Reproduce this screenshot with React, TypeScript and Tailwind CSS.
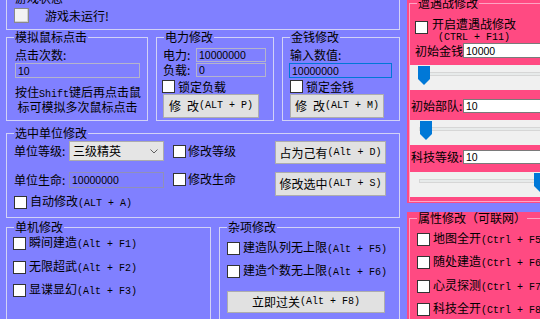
import React from "react";

// ASCII parts of labels are drawn in a fixed-width face, like the original SimSun look
function A({ children }: { children: React.ReactNode }) {
  return <span className="font-['Liberation_Mono',monospace] text-[10px]">{children}</span>;
}

function Box({ className = "" }: { className?: string }) {
  return <span className={`block w-[13px] h-[13px] shrink-0 bg-white border border-[#333333] ${className}`} />;
}

function Group({
  title,
  pink,
  className = "",
  children,
}: {
  title: string;
  pink?: boolean;
  className?: string;
  children?: React.ReactNode;
}) {
  return (
    <div className={`relative border ${pink ? "border-[#ffa3c2]" : "border-[#d2d2f6]"} ${className}`}>
      <span
        className={`absolute -top-[7px] left-[7px] px-[1px] leading-[12px] whitespace-nowrap ${
          pink ? "bg-[#ff4a82]" : "bg-[#8080ff]"
        }`}
      >
        {title}
      </span>
      {children}
    </div>
  );
}

function Btn({ className = "", children }: { className?: string; children: React.ReactNode }) {
  return (
    <div
      className={`flex items-center justify-center shrink-0 bg-[#e1e1e1] border border-[#adadad] whitespace-nowrap ${className}`}
    >
      {children}
    </div>
  );
}

function Field({ value, className = "" }: { value: string; className?: string }) {
  return (
    <div
      className={`flex items-center shrink-0 pl-[2px] border font-['Liberation_Sans',sans-serif] text-[10.5px] ${className}`}
    >
      {value}
    </div>
  );
}

function Slider({ left, className = "" }: { left: number; className?: string }) {
  return (
    <div className={`relative h-[25px] w-[140px] shrink-0 bg-[#f0f0f0] pt-[7px] pl-[9px] ${className}`}>
      <div className="h-[4px] bg-[#e7eaea] border border-[#d6d6d6]" />
      <svg
        width="12"
        height="19"
        viewBox="0 0 12 19"
        className="absolute top-[1px]"
        style={{ left }}
      >
        <path d="M0 0H12V13L6 19L0 13Z" fill="#0078d7" />
      </svg>
    </div>
  );
}

function Check({ label, className = "" }: { label: React.ReactNode; className?: string }) {
  return (
    <div className={`flex items-center h-[13px] whitespace-nowrap ${className}`}>
      <Box />
      <span className="ml-[3px]">{label}</span>
    </div>
  );
}

export default function App() {
  return (
    <div className="w-[540px] h-[319px] overflow-hidden bg-[#8080ff] flex font-['Noto_Sans_CJK_SC',sans-serif] text-[12px] leading-[12px] text-black">
      {/* left side */}
      <div className="w-[407px] shrink-0 pl-[6px] pr-[7px] flex flex-col">
        <Group title="游戏状态" className="-mt-[2px] h-[32px] shrink-0 flex items-start pt-[9px] pl-[7px]">
          <div className="flex items-center h-[15px]">
            <span className="block w-[15px] h-[15px] bg-[#f3f3f3] border border-[#8a8a8a] shadow-[inset_-1px_-1px_0_#d0d0d0]" />
            <span className="ml-[16px]">游戏未运行!</span>
          </div>
        </Group>

        <div className="mt-[7px] h-[84px] shrink-0 flex gap-[8px]">
          <Group title="模拟鼠标点击" className="w-[142px] shrink-0 pt-[11px] pl-[8px] flex flex-col">
            <div>点击次数:</div>
            <Field value="10" className="mt-[2px] w-[125px] h-[15px] border-[#b4b4cc]" />
            <div className="mt-[8px] w-[125px] text-center whitespace-nowrap">
              按住<A>Shift</A>键后再点击鼠
              <br />
              标可模拟多次鼠标点击
            </div>
          </Group>

          <Group title="电力修改" className="w-[118px] shrink-0 pt-[10px] pl-[6px] flex flex-col">
            <div className="flex items-center h-[14px]">
              <span className="w-[33px] shrink-0">电力:</span>
              <Field value="10000000" className="w-[70px] h-[14px] border-[#b4b4cc]" />
            </div>
            <div className="mt-[1px] flex items-center h-[14px]">
              <span className="w-[33px] shrink-0">负载:</span>
              <Field value="0" className="w-[70px] h-[14px] border-[#b4b4cc]" />
            </div>
            <Check label="锁定负载" className="mt-[3px] -ml-[1px]" />
            <Btn className="mt-[1px] w-[96px] h-[24px]">
              修<span className="w-[6px]" />改<A>(ALT + P)</A>
            </Btn>
          </Group>

          <Group title="金钱修改" className="flex-1 pt-[11px] pl-[6px] flex flex-col">
            <div className="pl-[1px]">输入数值:</div>
            <Field value="10000000" className="mt-[2px] w-[103px] h-[15px] border-[#0078d7]" />
            <Check label="锁定金钱" className="mt-[2px] ml-[1px]" />
            <Btn className="mt-[1px] ml-[1px] w-[94px] h-[24px]">
              修<span className="w-[6px]" />改<A>(ALT + M)</A>
            </Btn>
          </Group>
        </div>

        <Group title="选中单位修改" className="mt-[12px] h-[85px] shrink-0 pt-[7px] pl-[7px] flex flex-col">
          <div className="flex items-start h-[23px]">
            <span className="w-[55px] h-[20px] shrink-0 flex items-center">单位等级:</span>
            <div className="w-[95px] h-[20px] shrink-0 flex items-center pl-[3px] bg-[#e5e5e5] border border-[#acacac]">
              <span>三级精英</span>
              <svg width="8" height="5" viewBox="0 0 8 5" className="ml-auto mr-[5px]">
                <polyline points="0.5,0.5 4,4 7.5,0.5" fill="none" stroke="#606060" strokeWidth="1" />
              </svg>
            </div>
            <div className="ml-[9px] w-[102px] h-[20px] shrink-0 flex items-center">
              <Box className="w-[12px] h-[12px]" />
              <span className="ml-[2px]">修改等级</span>
            </div>
            <Btn className="w-[111px] h-[23px]">
              占为己有<A>(Alt + D)</A>
            </Btn>
          </div>
          <div className="mt-[8px] flex items-start h-[24px]">
            <span className="w-[55px] h-[16px] shrink-0 flex items-center">单位生命:</span>
            <Field value="10000000" className="w-[95px] h-[16px] border-[#9090b8]" />
            <div className="ml-[9px] w-[102px] h-[14px] shrink-0 flex items-center">
              <Box className="w-[12px] h-[12px]" />
              <span className="ml-[2px]">修改生命</span>
            </div>
            <Btn className="w-[111px] h-[24px]">
              修改选中<A>(ALT + S)</A>
            </Btn>
          </div>
          <Check
            label={
              <>
                自动修改<A>(ALT + A)</A>
              </>
            }
          />
        </Group>

        <div className="mt-[9px] h-[100px] shrink-0 flex gap-[8px]">
          <Group title="单机修改" className="w-[205px] shrink-0 pt-[9px] pl-[6px] flex flex-col">
            <Check label={<>瞬间建造<A>(Alt + F1)</A></>} />
            <Check className="mt-[11px]" label={<>无限超武<A>(Alt + F2)</A></>} />
            <Check className="mt-[10px]" label={<>显谍显幻<A>(Alt + F3)</A></>} />
          </Group>
          <Group title="杂项修改" className="flex-1 pt-[14px] pl-[7px] flex flex-col">
            <Check label={<>建造队列无上限<A>(Alt + F5)</A></>} />
            <Check className="mt-[10px]" label={<>建造个数无上限<A>(Alt + F6)</A></>} />
            <Btn className="mt-[13px] w-[158px] h-[22px]">
              立即过关<A>(Alt + F8)</A>
            </Btn>
          </Group>
        </div>
      </div>

      {/* right side */}
      <div className="w-[150px] shrink-0 flex flex-col">
        <div className="-mt-[10px] h-[213px] shrink-0 bg-[#ff4a82] pl-[2px] pt-[13px]">
          <Group pink title="遭遇战修改" className="h-[199px] flex flex-col">
            <div className="flex items-start pl-[5px]">
              <Box className="mt-[17px]" />
              <div className="ml-[4px] mt-[14px] leading-[11px] text-center whitespace-nowrap">
                开启遭遇战修改
                <br />
                <A>(CTRL + F11)</A>
              </div>
            </div>
            <div className="flex items-center h-[15px] pl-[5px]">
              <span className="w-[48px] shrink-0 whitespace-nowrap">初始金钱</span>
              <Field value="10000" className="w-[100px] h-[15px] bg-white border-[#7a7a7a]" />
            </div>
            <Slider left={8} className="mt-[7px]" />
            <div className="mt-[9px] flex items-center h-[14px] pl-[1px]">
              <span className="w-[52px] shrink-0 whitespace-nowrap">初始部队:</span>
              <Field value="10" className="w-[100px] h-[14px] bg-white border-[#7a7a7a]" />
            </div>
            <Slider left={10} className="mt-[7px]" />
            <div className="mt-[5px] flex items-center h-[14px] pl-[1px]">
              <span className="w-[52px] shrink-0 whitespace-nowrap">科技等级:</span>
              <Field value="10" className="w-[100px] h-[14px] bg-white border-[#7a7a7a]" />
            </div>
            <Slider left={124} className="mt-[8px]" />
          </Group>
        </div>

        <div className="mt-[9px] h-[120px] shrink-0 bg-[#ff4a82] pl-[2px] pt-[6px]">
          <Group pink title="属性修改（可联网）" className="h-[200px] pt-[14px] pl-[7px] flex flex-col">
            <Check label={<>地图全开<A>(Ctrl + F5)</A></>} />
            <Check className="mt-[10px]" label={<>随处建造<A>(Ctrl + F6)</A></>} />
            <Check className="mt-[11px]" label={<>心灵探测<A>(Ctrl + F7)</A></>} />
            <Check className="mt-[10px]" label={<>科技全开<A>(Ctrl + F8)</A></>} />
          </Group>
        </div>
      </div>
    </div>
  );
}
